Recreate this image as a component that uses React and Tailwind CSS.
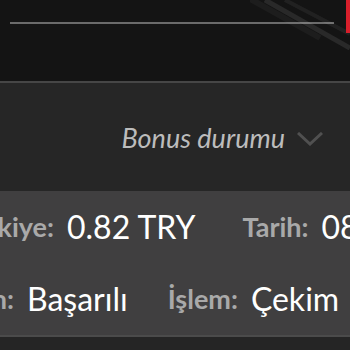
const rows = [
    {
        lead: "w-[54px]",
        gap: "ml-[47px]",
        items: [
            { label: "Bakiye:", value: "0.82 TRY" },
            { label: "Tarih:", value: "08.03.2024" },
        ],
    },
    {
        lead: "w-[14px]",
        gap: "ml-[40px]",
        items: [
            { label: "Durumun:", value: "Başarılı" },
            { label: "İşlem:", value: "Çekim" },
        ],
    },
];

export default function App() {
    return (
        <section
            className="w-[350px] h-[350px] overflow-hidden bg-[#252525]"
            style={{ fontFamily: "Lato, 'Open Sans', sans-serif" }}
        >
            <Header />
            <div className="h-[110px] flex items-center justify-end gap-3 pr-[27px] bg-[#262626] border-t-2 border-[#464646]">
                <span className="italic text-[27px] text-[#bcbcbc] leading-none">
                    Bonus durumu
                </span>
                <svg width="26" height="14" viewBox="0 0 26 14" className="mt-[3px]">
                    <polyline points="1,1 13,12 25,1" fill="none" stroke="#505050" strokeWidth="3" />
                </svg>
            </div>
            <div className="bg-[#403f40] border-b-2 border-[#4b4b4b] overflow-hidden">
                {rows.map((row, i) => (
                    <div key={i} className="h-[72px] flex items-center whitespace-nowrap">
                        {row.items.map((item, j) => (
                            <div key={j} className={"flex items-center " + (j === 0 ? "" : row.gap)}>
                                {j === 0 ? (
                                    <span className={row.lead + " flex justify-end overflow-hidden shrink-0"}>
                                        <span className="text-[27px] font-bold text-[#a9a9a9]">{item.label}</span>
                                    </span>
                                ) : (
                                    <span className="text-[27px] font-bold text-[#a9a9a9]">{item.label}</span>
                                )}
                                <span className="ml-[13px] text-[32px] text-white">{item.value}</span>
                            </div>
                        ))}
                    </div>
                ))}
            </div>
        </section>
    );
}

function Header() {
    return (
        <div className="relative h-[81px] bg-[#141414] pt-[22px] px-[10px] pr-[16px]">
            <div className="h-[2px] bg-[#6b6b6b]"></div>
            {/* light streaks top right */}
            <svg className="absolute top-0 right-0" width="100" height="60" viewBox="0 0 100 60">
                <line x1="15" y1="0" x2="100" y2="48" stroke="#ffffff" strokeOpacity="0.09" strokeWidth="5" />
                <line x1="35" y1="0" x2="100" y2="34" stroke="#ffffff" strokeOpacity="0.06" strokeWidth="4" />
                <line x1="-5" y1="-4" x2="70" y2="38" stroke="#ffffff" strokeOpacity="0.04" strokeWidth="6" />
            </svg>
            <div className="absolute top-0 right-0 w-[4px] h-[33px] bg-[#d81f2b]"></div>
        </div>
    );
}
